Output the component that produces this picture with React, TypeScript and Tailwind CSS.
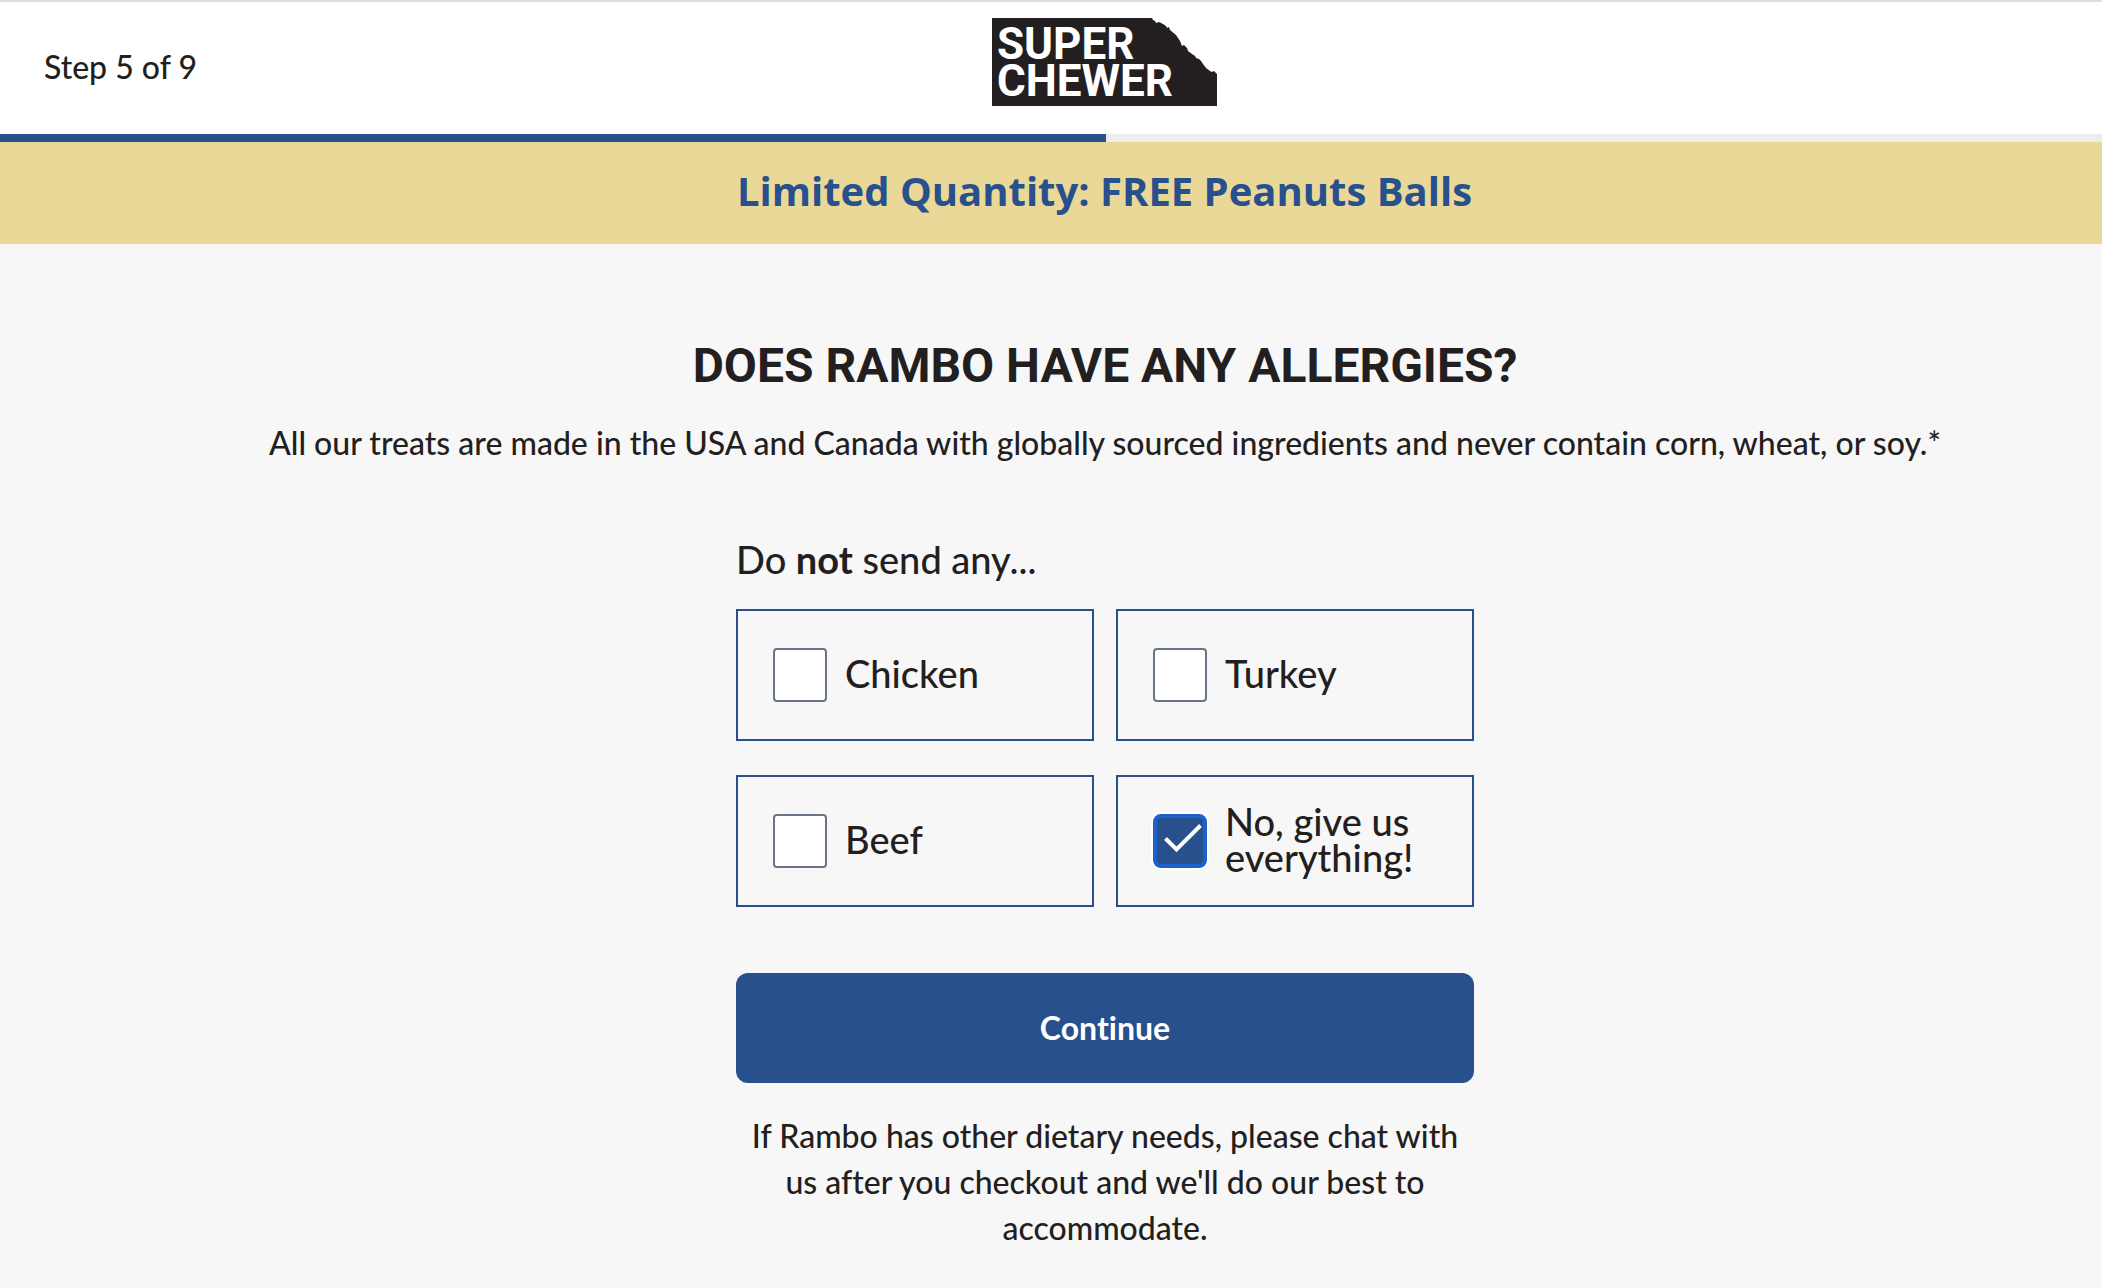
import { useState } from 'react'

const SuperChewerLogo = () => (
  <svg
    viewBox="0 0 225 88"
    className="w-[225px] h-[88px]"
    role="img"
    aria-label="Super Chewer"
  >
    <path
      fill="#231f20"
      d="M0 0H160L161 2L163 3L164 5L167 4L171 6L174 8L175 10L177 9L178 12L184 17L188 23L190 28L192 27L195 30L196 33L200 36L203 38L204 40L207 41L209 43L211 46L214 50L218 53L220 54L222 53L225 56V88H0Z"
    />
    <g
      fill="#fff"
      fontFamily="Roboto, sans-serif"
      fontWeight="700"
      fontSize="44"
    >
      <text x="5" y="41">
        SUPER
      </text>
      <text x="5" y="78">
        CHEWER
      </text>
    </g>
  </svg>
)

const options = [
  { id: 'chicken', label: 'Chicken' },
  { id: 'turkey', label: 'Turkey' },
  { id: 'beef', label: 'Beef' },
  { id: 'none', label: 'No, give us everything!' }
]

export default function App() {
  const [selected, setSelected] = useState<string[]>(['none'])

  const toggle = (id: string) => {
    if (id === 'none') {
      setSelected(['none'])
      return
    }
    const rest = selected.filter((s) => s !== 'none')
    setSelected(
      rest.includes(id) ? rest.filter((s) => s !== id) : [...rest, id]
    )
  }

  return (
    <div className="min-h-screen bg-[#f7f7f7] text-[#231f20] font-['Lato',sans-serif] font-medium [font-variant-ligatures:none]">
      <header className="relative bg-white border-t-2 border-[#dcdce1]">
        <div className="flex justify-center pl-[107px] pt-4 pb-7">
          <SuperChewerLogo />
        </div>
        <p className="absolute left-11 top-[45px] text-[32px] leading-10">
          Step 5 of 9
        </p>
        <div className="h-2 bg-[#ededed]">
          <div className="h-full w-[calc(50%+55px)] bg-[#27508c]" />
        </div>
      </header>

      <div className="bg-[#e9d898] pl-[107px] h-[102px] flex items-center justify-center">
        <p className="text-[40px] leading-[50px] pb-1 font-bold text-[#27508c] font-['Open_Sans',sans-serif]">
          Limited Quantity: FREE Peanuts Balls
        </p>
      </div>

      <main className="pl-[108px] pt-24 pb-11 flex flex-col items-center">
        <h1 className="text-[48px] leading-[52px] font-bold uppercase text-center font-['Roboto',sans-serif]">
          Does Rambo have any allergies?
        </h1>
        <p className="mt-7 text-[32px] leading-[46px] text-center">
          All our treats are made in the USA and Canada with globally sourced
          ingredients and never contain corn, wheat, or soy.*
        </p>

        <form
          className="w-full max-w-[738px] mt-[68px]"
          onSubmit={(e) => e.preventDefault()}
        >
          <fieldset>
            <legend className="text-[38px] leading-[50px] mb-[25px]">
              Do <strong className="font-bold">not</strong> send any...
            </legend>
            <div className="grid grid-cols-2 gap-x-[22px] gap-y-[34px]">
              {options.map((option) => (
                <label
                  key={option.id}
                  htmlFor={option.id}
                  className="h-[132px] border-2 border-[#27508c] px-[35px] flex items-center gap-[18px] cursor-pointer"
                >
                  <span className="grid shrink-0">
                    <input
                      id={option.id}
                      type="checkbox"
                      checked={selected.includes(option.id)}
                      onChange={() => toggle(option.id)}
                      className="peer col-start-1 row-start-1 appearance-none size-[54px] bg-white border-2 border-[#687586] rounded-[4px] checked:bg-[#27508c] checked:border-4 checked:border-[#1a61cb] checked:rounded-lg checked:ring-2 checked:ring-white"
                    />
                    <svg
                      viewBox="0 0 54 54"
                      className="col-start-1 row-start-1 size-[54px] hidden peer-checked:block pointer-events-none"
                      fill="none"
                      stroke="#fff"
                      strokeWidth="4"
                    >
                      <path d="M12.5 24.5L23.5 35.5L47.5 11.5" />
                    </svg>
                  </span>
                  <span className="text-[38px] leading-9 pb-1">
                    {option.label}
                  </span>
                </label>
              ))}
            </div>
          </fieldset>

          <button
            type="submit"
            className="mt-[66px] w-full h-[110px] rounded-xl bg-[#27508c] text-white text-[32px] font-bold"
          >
            Continue
          </button>
          <p className="mt-[30px] text-[32px] leading-[46px] text-center">
            If Rambo has other dietary needs, please chat with us after you
            checkout and we'll do our best to accommodate.
          </p>
        </form>
      </main>
    </div>
  )
}
